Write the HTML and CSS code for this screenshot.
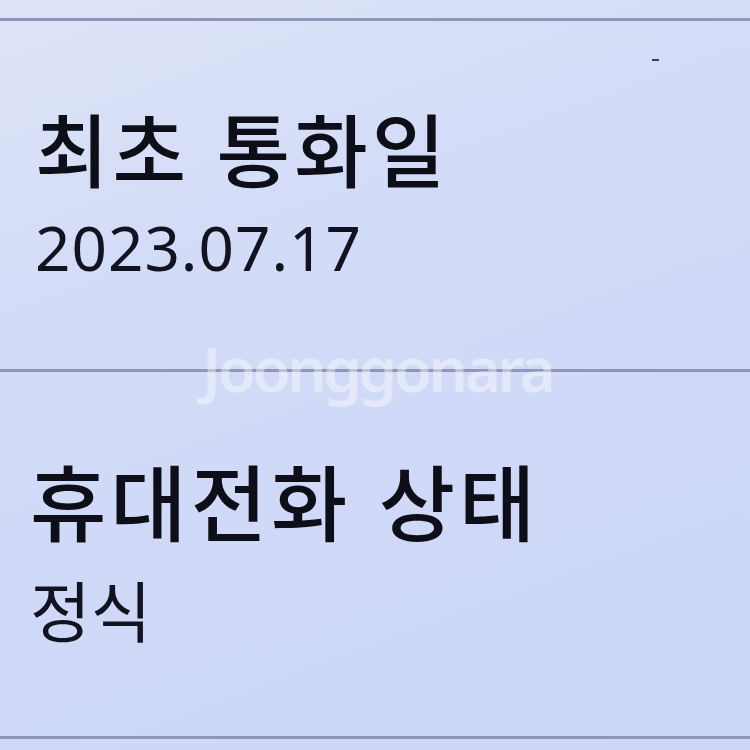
FILE: index.html
```html
<!DOCTYPE html>
<html lang="ko">
<head>
<meta charset="utf-8">
<link rel="stylesheet" href="styles.css">
</head>
<body>
<div class="screen">
  <div class="divider top"></div>
  <section class="item first">
    <h2 class="label">최초 통화일</h2>
    <p class="value num">2023.07.17</p>
  </section>
  <div class="divider"></div>
  <section class="item second">
    <h2 class="label big">휴대전화 상태</h2>
    <p class="value kr">정식</p>
  </section>
  <div class="divider"></div>
  <div class="watermark">Joonggonara</div>
  <div class="speck"></div>
</div>
</body>
</html>
```

FILE: styles.css
```css
html, body {
  margin: 0;
  padding: 0;
}
body {
  width: 750px;
  height: 750px;
  overflow: hidden;
  background: #cdd6f7;
}
.screen {
  position: relative;
  width: 750px;
  height: 750px;
  display: flex;
  flex-direction: column;
  background: linear-gradient(160deg, #dde4f7 0%, #d2dbf7 35%, #ccd6f7 100%);
}
.divider {
  height: 3px;
  background: #8f96b8;
}
.divider.top {
  margin-top: 18px;
}
.item {
  display: flex;
  flex-direction: column;
}
.item.first {
  padding: 85px 0 91px 35px;
}
.item.second {
  padding: 86px 0 95px 30px;
}
.label {
  margin: 0;
  font-family: "Noto Sans CJK KR", "Noto Sans", sans-serif;
  font-weight: 500;
  font-size: 80px;
  line-height: 80px;
  color: #0d0e18;
  letter-spacing: 4px;
}
.label.big {
  font-size: 83px;
  line-height: 83px;
}
.value {
  margin: 0;
  color: #111320;
}
.value.num {
  margin-top: 30px;
  font-family: "Noto Sans", sans-serif;
  font-weight: 400;
  font-size: 62px;
  line-height: 62px;
  letter-spacing: 1px;
}
.value.kr {
  margin-top: 34px;
  font-family: "Noto Sans CJK KR", sans-serif;
  font-weight: 400;
  font-size: 66px;
  line-height: 66px;
}
.watermark {
  position: absolute;
  left: 202px;
  top: 337px;
  font-family: "Noto Sans", sans-serif;
  font-weight: 600;
  font-size: 62px;
  line-height: 62px;
  color: rgba(255, 255, 255, 0.42);
  letter-spacing: -3.5px;
}
.speck {
  position: absolute;
  left: 652px;
  top: 59px;
  width: 7px;
  height: 2px;
  background: #3a3f55;
}
```
